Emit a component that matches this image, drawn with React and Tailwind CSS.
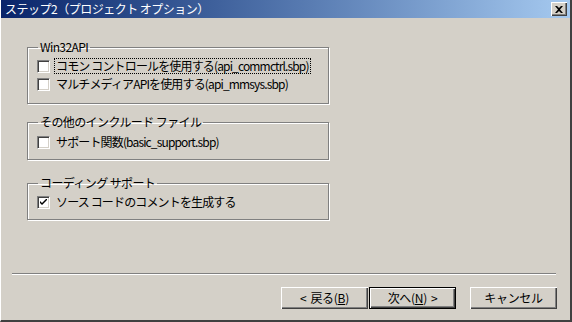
import React from 'react';

const font = { fontFamily: '"Noto Sans CJK JP", "MS UI Gothic", sans-serif' };

const Check = ({ checked, label, focused }) => (
    <label className="flex items-center h-[18px]">
        <span className="relative w-[13px] h-[13px] bg-white border-t border-l border-[#808080] border-b border-r border-b-white border-r-white shadow-[inset_1px_1px_0_#404040,inset_-1px_-1px_0_#d4d0c8] flex items-center justify-center">
            {checked && (
                <svg width="7" height="7" viewBox="0 0 7 7">
                    <path d="M0 2 L0 4 L2 6 L7 1 L7 -1 L2 4 Z" fill="black" />
                </svg>
            )}
        </span>
        <span className={`ml-[5px] px-[1px] leading-[14px] whitespace-nowrap tracking-[-0.85px] ${focused ? 'outline outline-1 outline-dotted outline-black' : ''}`}>
            {label}
        </span>
    </label>
);

const Group = ({ title, children, className }) => (
    <fieldset className={`w-[302px] border border-[#808080] shadow-[inset_1px_1px_0_white,1px_1px_0_white] pl-[9px] ${className}`}>
        <legend className="ml-[1px] px-[2px] leading-[14px] whitespace-nowrap tracking-[-0.6px]">{title}</legend>
        {children}
    </fieldset>
);

const Button = ({ children, isDefault }) => (
    <button
        className={`w-[87px] h-[22px] bg-[#d4d0c8] leading-none tracking-[-0.3px] ${
            isDefault
                ? 'border border-black shadow-[inset_1px_1px_0_white,inset_-1px_-1px_0_#404040,inset_-2px_-2px_0_#808080]'
                : 'shadow-[inset_1px_1px_0_white,inset_-1px_-1px_0_#404040,inset_-2px_-2px_0_#808080]'
        }`}
    >
        {children}
    </button>
);

export default function App() {
    return (
        <div className="w-[572px] h-[322px] bg-[#d4d0c8] text-[12px] text-black flex flex-col border-l border-l-white border-b-2 border-b-[#404040] border-r-2 border-r-[#404040]" style={font}>
            <div className="h-[18px] flex items-center justify-between bg-gradient-to-r from-[#0a246a] to-[#a6caf0] pl-[4px] pr-[3px]">
                <span className="text-white leading-none tracking-[-0.5px]">ステップ2（プロジェクト オプション）</span>
                <span className="w-[16px] h-[14px] bg-[#d4d0c8] shadow-[inset_1px_1px_0_white,inset_-1px_-1px_0_#404040,inset_-2px_-2px_0_#808080] flex items-center justify-center">
                    <svg width="8" height="7" viewBox="0 0 8 7">
                        <path d="M0 0h2l2 2 2-2h2L5 3.5 8 7H6L4 5 2 7H0l3-3.5z" fill="black" />
                    </svg>
                </span>
            </div>

            <div className="flex flex-col pl-[26px] pt-[22px]">
                <Group title="Win32API" className="h-[64px] pt-[3px]">
                    <Check label="コモン コントロールを使用する(api_commctrl.sbp)" focused />
                    <Check label="マルチメディアAPIを使用する(api_mmsys.sbp)" />
                </Group>
                <Group title="その他のインクルード ファイル" className="h-[45px] mt-[11px] pt-[4px]">
                    <Check label="サポート関数(basic_support.sbp)" />
                </Group>
                <Group title="コーディング サポート" className="h-[44px] mt-[16px] pt-[3px]">
                    <Check label="ソース コードのコメントを生成する" checked />
                </Group>
            </div>

            <div className="flex-1" />

            <div className="ml-[11px] mr-[14px] h-[2px] border-t border-t-[#808080] border-b border-b-white" />

            <div className="flex justify-end items-center pr-[13px] pt-[12px] pb-[11px]">
                <Button><span className="mr-[4px]">&lt;</span>戻る(<u>B</u>)</Button>
                <div className="w-[1px]" />
                <Button isDefault>次へ(<u>N</u>)<span className="ml-[4px]">&gt;</span></Button>
                <div className="w-[14px]" />
                <Button>キャンセル</Button>
            </div>
        </div>
    );
}
